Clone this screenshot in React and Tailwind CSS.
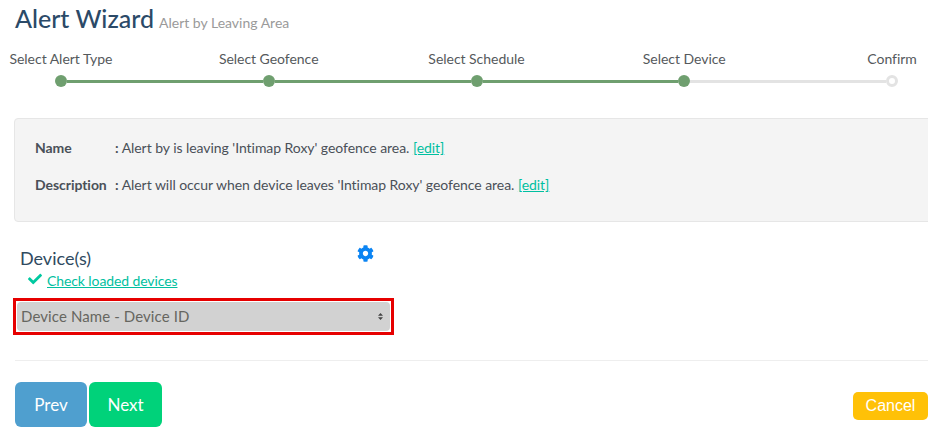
import React from "react";
import { FaCog, FaCheck } from "react-icons/fa";

const steps = ["Select Alert Type", "Select Geofence", "Select Schedule", "Select Device", "Confirm"];

function Dot({ done }) {
  return done ? (
    <span className="w-3 h-3 rounded-full bg-[#6f9f6f] shrink-0" />
  ) : (
    <span className="w-3 h-3 rounded-full bg-white border-[3px] border-[#e3e3e3] shrink-0" />
  );
}

function Line({ done }) {
  return <span className={done ? "flex-1 h-[3px] bg-[#6f9f6f]" : "flex-1 h-[3px] bg-[#e3e3e3]"} />;
}

export default function App() {
  return (
    <div className="w-[928px] h-[447px] overflow-hidden bg-white font-['Lato','Open_Sans',sans-serif] text-[14px] text-[#4a4f55]">
      <div className="pl-[15px] pt-[2px] flex items-baseline h-[38px]">
        <h1 className="text-[25px] leading-[32px] font-medium text-[#2b4a68]">Alert Wizard</h1>
        <span className="ml-[5px] text-[14px] leading-[20px] text-[#9a9a9a]">Alert by Leaving Area</span>
      </div>

      <div className="w-[1039px] -ml-[43px] grid grid-cols-5 mt-[11px] text-[14px] leading-[20px] tracking-[-0.03px] text-[#55595c] text-center">
        {steps.map((s) => (
          <div key={s}>{s}</div>
        ))}
      </div>
      <div className="ml-[55px] w-[843px] flex items-center mt-[6px] h-3">
        <Dot done />
        <Line done />
        <Dot done />
        <Line done />
        <Dot done />
        <Line done />
        <Dot done />
        <Line />
        <Dot />
      </div>

      <div className="ml-[14px] w-[950px] h-[104px] mt-[31px] bg-[#f4f4f4] border border-[#e6e6e6] rounded-[4px] pl-[20px] pt-[19px] leading-[20px] tracking-[-0.05px] text-[#4a5058]">
        <div className="flex">
          <span className="w-[80px] font-bold">Name</span>
          <span>
            <b>:</b> Alert by is leaving 'Intimap Roxy' geofence area.{" "}
            <a className="text-[#00bfa0] underline">[edit]</a>
          </span>
        </div>
        <div className="flex mt-[17px]">
          <span className="w-[80px] font-bold">Description</span>
          <span>
            <b>:</b> Alert will occur when device leaves 'Intimap Roxy' geofence area.{" "}
            <a className="text-[#00bfa0] underline">[edit]</a>
          </span>
        </div>
      </div>

      <div className="ml-[13px] w-[381px] mt-[23px]">
        <div className="flex items-start justify-between pl-[7px] pr-[20px] h-[25px]">
          <span className="text-[18px] leading-[24px] mt-[1px] text-[#2f4a60]">Device(s)</span>
          <FaCog className="text-[17px] text-[#0b84f3]" />
        </div>
        <div className="flex items-center pl-[15px] h-[20px] mt-[1px]">
          <FaCheck className="text-[14px] text-[#00c9a0] -mt-[4px]" />
          <a className="ml-[5px] underline text-[#00bfa0] leading-[20px] tracking-[-0.1px]">Check loaded devices</a>
        </div>
        <div className="mt-[7px] border-[3px] border-[#e60000] p-px h-[37px] bg-white">
          <div className="h-full rounded-[4px] bg-[#d2d2d2] flex items-center justify-between pl-[4px] pr-[7px] text-[15px] tracking-[0.1px] text-[#666660]">
            <span>Device Name - Device ID</span>
            <svg width="5" height="7" viewBox="0 0 5 7" className="text-[#444]">
              <path d="M2.5 0 L5 2.8 H0 Z M2.5 7 L0 4.2 H5 Z" fill="currentColor" />
            </svg>
          </div>
        </div>
      </div>

      <div className="ml-[15px] w-[950px] h-px bg-[#eeeeee] mt-[25px]" />

      <div className="pl-[15px] flex items-center mt-[21px]">
        <button className="w-[72px] h-[45px] rounded-[6px] bg-[#4f9fcf] text-white text-[17px]">Prev</button>
        <button className="ml-[2px] w-[73px] h-[45px] rounded-[6px] bg-[#00d27a] text-white text-[17px]">Next</button>
        <button className="ml-auto mt-[3px] w-[75px] h-[28px] rounded-[5px] bg-[#ffc107] text-white text-[16px] font-['Liberation_Sans',sans-serif]">Cancel</button>
      </div>
    </div>
  );
}
